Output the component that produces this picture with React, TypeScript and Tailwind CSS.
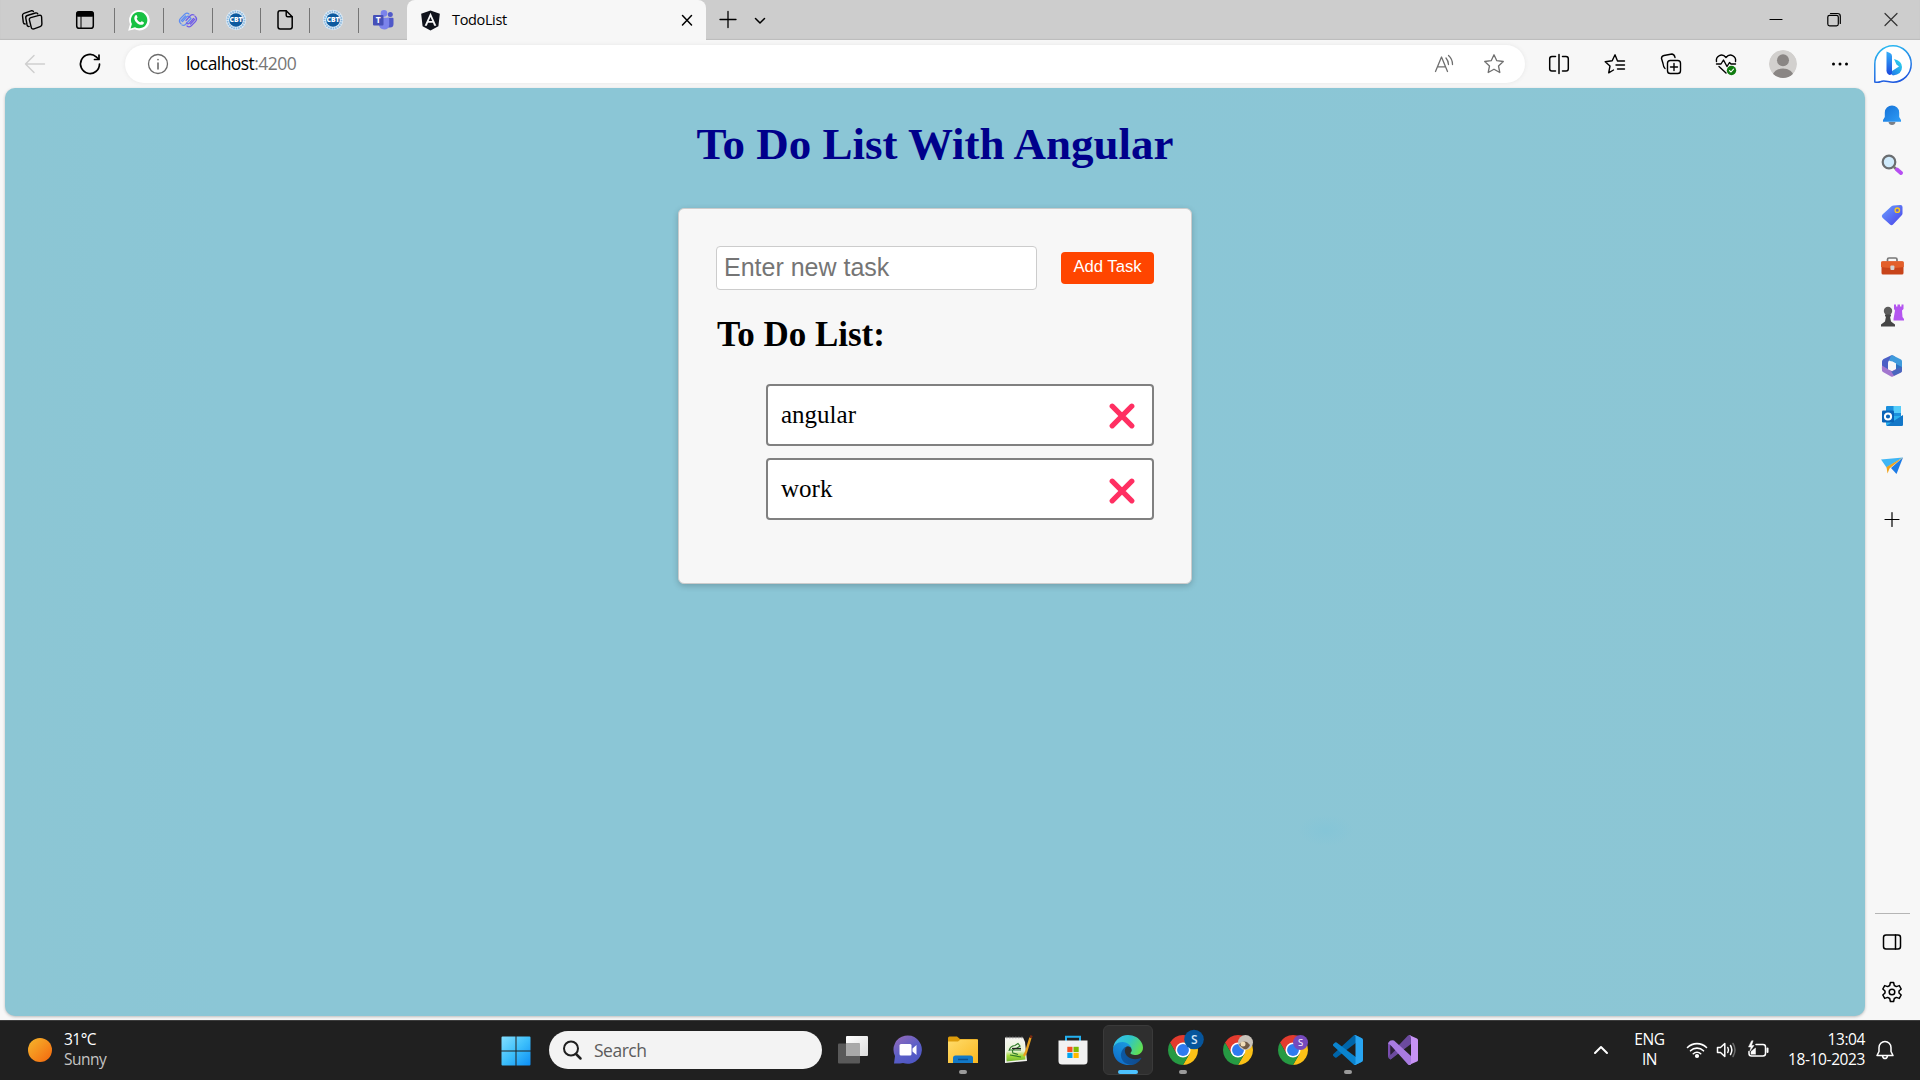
import type { ReactNode } from "react";
import { FaAngular } from "react-icons/fa";

const UI = "font-['Open_Sans','Noto_Sans',sans-serif]";

type LineProps = { size?: number; sw?: number; className?: string; children: ReactNode };

/** Line icon on a square canvas centred on 0,0; one unit is one pixel. */
function Line({ size = 24, sw = 1.4, className = "", children }: LineProps) {
  return (
    <svg
      width={size}
      height={size}
      viewBox={`${-size / 2} ${-size / 2} ${size} ${size}`}
      fill="none"
      stroke="currentColor"
      strokeWidth={sw}
      strokeLinecap="round"
      strokeLinejoin="round"
      className={`shrink-0 ${className}`}
    >
      {children}
    </svg>
  );
}

function Cell({ className, children }: { className: string; children?: ReactNode }) {
  return <div className={`flex shrink-0 items-center justify-center ${className}`}>{children}</div>;
}

const STAR = "M0-9.2 2.8-3.3 9.3-2.5 4.5 2 5.8 8.5 0 5.2-5.8 8.5-4.5 2-9.3-2.5-2.8-3.3Z";

/* ---------- Tab strip ---------- */

function WorkspacesIcon() {
  return (
    <Line size={26} sw={1.4}>
      <path d="M-1.2-2.4 7-4.6q2.2-.6 2.6 1.4L9.9 4q.1 2-1.8 2.6L2 8.9Q-.4 9.5-.8 7.2L-2.6 0q-.4-1.9 1.4-2.4Z" />
      <path d="M-2.8 6.4Q-4.5 6.8-4.9 5L-6.2-1.900q-.4-2 1.500-2.600L3.400-7q1.600-.4 2.400.9" />
      <path d="M-6.800 4Q-8.400 4-8.700 2.400L-9.500-4.300q-.2-1.800 1.400-2.400L-.9-9.200q1.500-.4 2.300.6" />
    </Line>
  );
}

function TabActionsIcon() {
  return (
    <Line size={24} sw={1.5}>
      <rect x="-8.3" y="-8.3" width="16.6" height="16.6" rx="2.6" />
      <path d="M-8-5.8v-.6Q-8-8-6-8H6q2 0 2 1.6v1.6q0 .8-1 .8H-7q-1 0-1-.8Z" fill="currentColor" />
      <path d="M-4-4V8" strokeWidth="1" />
    </Line>
  );
}

function WhatsAppIcon() {
  return (
    <svg width="22" height="22" viewBox="-11 -11 22 22">
      <path d="M-10 10-8.4 4.2A9.7 9.7 0 1 1-4.4 8.6Z" fill="#fff" stroke="#fff" strokeWidth="1.2" />
      <path d="M-8.4 8.4-7.1 4A8.2 8.2 0 1 1-4 7.2Z" fill="#18c143" />
      <path d="M-3.6-4.6c.5-.5 1.2-.4 1.4.1l.7 1.7c.1.5-.9 1-.7 1.5C-1.4.4-.2 1.6 1.2 2.2c.5.2 1.1-1.1 1.6-.9l1.9.9c.6.4-.1 2-.8 2.3C1.7 5.5-.9 4.2-2.6 2.5-4.4.7-5.7-2.6-3.6-4.6Z" fill="#fff" />
    </svg>
  );
}

function SwirlIcon() {
  return (
    <svg width="22" height="22" viewBox="-11 -11 22 22" fill="none" strokeWidth="1.2" strokeLinecap="round">
      <g stroke="#5d8df5">
        <path d="M-7 3.800Q-10 1-7.500-1.500L-3-6Q-1-7.800 1-6" />
        <path d="M-5.500 1.500-1.500-3Q0-4.500 1.500-3L3 -1.500" />
        <path d="M-6 5Q-4 6-2.500 4.500L2.500-1" />
        <path d="M-7 1-2.500-4" />
      </g>
      <g stroke="#6f5be8">
        <path d="M7-3.800Q10-1 7.500 1.500L3 6Q1 7.800-1 6" />
        <path d="M5.500-1.500 1.500 3Q0 4.500-1.500 3" />
        <path d="M6-5Q4-6 2.500-4.500L-2 .5" />
        <path d="M7-1 2.500 4" />
      </g>
    </svg>
  );
}

function BadgeIcon() {
  return (
    <svg width="22" height="22" viewBox="-11 -11 22 22" className="-translate-x-px">
      <circle r="10.2" fill="#dcebf7" />
      <circle r="8.500" fill="none" stroke="#8db8dc" strokeWidth="1.800" strokeDasharray="1.500 .9" />
      <circle r="6.800" fill="#0d5a9f" />
      <text y="2.300" textAnchor="middle" fontSize="6.500" fontWeight="800" fill="#fff" textLength="13" lengthAdjust="spacingAndGlyphs" fontFamily="Open Sans, sans-serif">CBT</text>
    </svg>
  );
}

function FileIcon() {
  return (
    <Line size={24} sw={1.5}>
      <path d="M-5-9.300H1.200L7.200-3.300V6.800q0 2.200-2.200 2.200H-4.800Q-7 9-7 6.800V-7.100q0-2.200 2-2.200Z" />
      <path d="M1.200-9V-4.800q0 1.500 1.500 1.500H7" />
    </Line>
  );
}

function TeamsIcon() {
  return (
    <svg width="24" height="22" viewBox="-12 -11 24 22">
      <circle cx="7.300" cy="-5.500" r="2.500" fill="#5059c9" />
      <path d="M4.500-2.200H9.700Q10.500-2.200 10.500-1.200V4Q10.500 7.600 7 7.600H4.500Z" fill="#5059c9" />
      <circle cx="1" cy="-6.600" r="3.300" fill="#7b83eb" />
      <path d="M-4-2.200H5.200Q6.200-2.200 6.200-1V4.500Q6 9.500 1.200 9.500-4 9.300-4.200 4Z" fill="#7b83eb" />
      <rect x="-10" y="-5" width="10.500" height="10.500" rx="1" fill="#4650b8" />
      <text x="-4.700" y="3.300" textAnchor="middle" fontSize="8.500" fontWeight="700" fill="#fff" fontFamily="Open Sans, sans-serif">T</text>
    </svg>
  );
}

const PINNED: { icon: ReactNode; width: string }[] = [
  { icon: <WhatsAppIcon />, width: "w-[48px]" },
  { icon: <SwirlIcon />, width: "w-[48px]" },
  { icon: <BadgeIcon />, width: "w-[47px]" },
  { icon: <FileIcon />, width: "w-[48px]" },
  { icon: <BadgeIcon />, width: "w-[48px]" },
  { icon: <TeamsIcon />, width: "w-[48px]" },
];

function TabStrip() {
  return (
    <div className="flex h-10 shrink-0 items-center bg-[#cdcdcd] text-black shadow-[inset_0_-1px_1px_#bcbcbc]">
      <Cell className="w-16"><WorkspacesIcon /></Cell>
      <Cell className="mr-2 w-[42px]"><TabActionsIcon /></Cell>
      {PINNED.map((p, i) => (
        <div key={i} className="flex items-center">
          <div className="h-[25px] w-px bg-[#757575]" />
          <Cell className={`h-10 ${p.width}`}>{p.icon}</Cell>
        </div>
      ))}
      <div className="flex h-10 w-[299px] shrink-0 items-center rounded-t-lg bg-[#f7f7f7] pl-[12px] pr-[9px]">
        <FaAngular size={23} className="text-[#10131c]" />
        <span className={`${UI} ml-[10px] flex-1 text-[14.5px] leading-5 tracking-[-0.35px]`}>TodoList</span>
        <Line size={20} sw={1.5}><path d="M-4.500-4.500 4.500 5M4.500-4.500-4.500 5" /></Line>
      </div>
      <Cell className="w-[44px]"><Line sw={1.3} size={22}><path d="M-8-.5H8M0-8.500V7.500" /></Line></Cell>
      <Cell className="w-5"><Line size={16} sw={1.5}><path d="M-4.500-1.500 0 3 4.500-1.500" /></Line></Cell>
      <div className="flex-1" />
      <Cell className="w-[58px]"><Line size={18} sw={1.2}><path d="M-6-.5H6" /></Line></Cell>
      <Cell className="w-[57px]">
        <Line size={18} sw={1.2}>
          <rect x="-6.200" y="-4.700" width="10.500" height="10.500" rx="1.800" />
          <path d="M-3.500-6.500H3.500Q6.300-6.500 6.300-3.700V3.500" />
        </Line>
      </Cell>
      <Cell className="w-[58px]"><Line size={18} sw={1.2} className="text-[#333]"><path d="M-6-6.500 6 5.500M6-6.500-6 5.500" /></Line></Cell>
    </div>
  );
}

/* ---------- Address bar ---------- */

function BingIcon() {
  return (
    <svg width="42" height="42" viewBox="-21 -21 42 42">
      <defs>
        <linearGradient id="bingRing" x1="0" y1="0" x2="0.3" y2="1">
          <stop offset="0" stopColor="#2cc3f2" /><stop offset="1" stopColor="#1f5be0" />
        </linearGradient>
        <linearGradient id="bingStem" x1="0" y1="0" x2="0" y2="1">
          <stop offset="0" stopColor="#35b0fa" /><stop offset="1" stopColor="#1b48dd" />
        </linearGradient>
        <linearGradient id="bingBowl" x1="0" y1="1" x2="1" y2="0">
          <stop offset="0" stopColor="#1d62e8" /><stop offset="1" stopColor="#2fe0ee" />
        </linearGradient>
      </defs>
      <path d="M-18.200 18V0A18.200 18.200 0 1 1 0 18.200C-5 18-9 16-12 17.500Q-15 18.800-18.200 18Z" fill="#fff" stroke="url(#bingRing)" strokeWidth="1.500" />
      <path d="M-6.500 6.500 0 11.500Q9 10.500 9 3 9-3 1-5L3.500.5 6 2.500-1 7Z" fill="url(#bingBowl)" />
      <path d="M-6.500-12.500-3-11Q-1-10-1-8V8Q-1 11-3.500 11-6.500 9.500-6.500 6.500Z" fill="url(#bingStem)" />
    </svg>
  );
}

function Toolbar() {
  return (
    <div className="flex h-12 shrink-0 items-center bg-[#f7f7f7] pb-px text-black">
      <Cell className="w-[70px]"><Line sw={1.4} className="text-[#cfcfcf]"><path d="M9.500 0H-9.500M-1-8.500-9.500 0-1 8.500" /></Line></Cell>
      <Cell className="w-[40px]">
        <Line sw={1.7}>
          <path d="M9.500 0A9.500 9.500 0 1 1 6.200-7.200L8.500-5" />
          <path d="M9-9V-4.500H4.500" />
        </Line>
      </Cell>
      <div className="ml-[15px] flex h-[38px] w-[1400px] items-center rounded-full bg-white pl-[21px] shadow-[0_0_4px_#e6e6e6]">
        <Line className="text-[#6b6b6b]" sw={1.3}>
          <circle r="9.500" />
          <path d="M0-1V5M0-4.500V-4.300" strokeWidth="1.600" />
        </Line>
        <div className={`${UI} ml-[16px] flex-1 pb-px text-[17.5px] leading-6 tracking-[-0.56px]`}>
          localhost<span className="text-[#767676]">:4200</span>
        </div>
        <Cell className="w-[50px]">
          <Line className="text-[#6f6f6f]" sw={1.3}>
            <path d="M-8.500 7.500-2.500-7 3.500 7.500M-6.500 2.800H1.500M2-6Q4.500-3 4.500.5M4.500-8.500Q8.500-5 8.500.5" />
          </Line>
        </Cell>
        <Cell className="mr-[6px] w-[50px]"><Line className="text-[#6f6f6f]" sw={1.3}><path d={STAR} /></Line></Cell>
      </div>
      <Cell className="ml-[6px] w-[56px]">
        <Line sw={1.5}>
          <path d="M-3.500-7.500H-7q-2.300 0-2.300 2.300V4.700Q-9.300 7-7 7h3.500M3.500-7.500H7q2.300 0 2.300 2.300V4.700Q9.300 7 7 7H3.500M0-9.500V9.500" />
        </Line>
      </Cell>
      <Cell className="w-[56px]">
        <Line sw={1.4}>
          <path d="M2.500-3 0-9.200-2.800-3.200-9.800-2.300-5 2-6.300 8.800-1.500 6M2.500-3H9.500M1 1H9.500M2.500 5H9.500" />
        </Line>
      </Cell>
      <Cell className="w-[55px]">
        <Line sw={1.4}>
          <rect x="-3.500" y="-3.500" width="13" height="13" rx="2.800" />
          <path d="M3-.5V6.500M-.5 3H6.500M-6 4.500Q-7.500 3.500-8-.5L-9.500-5.500Q-9.500-8-7-8.500L1-10Q3.500-9.500 4-6.500" />
        </Line>
      </Cell>
      <Cell className="w-[55px]">
        <Line sw={1.4}>
          <path d="M-9.500-2.500C-10.500-8-4-11.500 0-6.500 4-11.500 10.500-8 9.500-2.500M-9.500 0H-5L-2.500-4 1 2.500 3.500-1.500 5 0H9.500M-7 2.500 0 9" />
          <circle cx="5.500" cy="6.500" r="4.700" fill="#107c10" stroke="none" />
          <path d="M3.500 6.700 5 8 7.500 5.200" stroke="#fff" strokeWidth="1.100" />
        </Line>
      </Cell>
      <Cell className="w-[59px]">
        <svg width="28" height="28" viewBox="-14 -14 28 28">
          <clipPath id="avatarClip"><circle r="14" /></clipPath>
          <g clipPath="url(#avatarClip)">
            <circle r="14" fill="#d2d0ce" />
            <circle cy="-3.800" r="6" fill="#8a8684" />
            <ellipse cy="12" rx="10.500" ry="7.500" fill="#8a8684" />
          </g>
        </svg>
      </Cell>
      <Cell className="w-[56px]">
        <Line><g fill="currentColor" stroke="none"><circle cx="-6.500" r="1.500" /><circle r="1.500" /><circle cx="6.500" r="1.500" /></g></Line>
      </Cell>
      <Cell className="w-[50px] pt-px"><BingIcon /></Cell>
    </div>
  );
}

/* ---------- To-do page ---------- */

function Task({ label, markOffset }: { label: string; markOffset: string }) {
  return (
    <li className="flex h-[62px] items-center justify-between rounded-[4px] border-2 border-[#808080] bg-white pl-[13px] pr-[17px]">
      <span className="pb-px text-[25px] leading-7">{label}</span>
      <svg width="26" height="26" viewBox="-13 -13 26 26" className={markOffset}>
        <path d="M-9.800-9.800 9.800 9.800M9.800-9.800-9.800 9.800" stroke="#ff2f62" strokeWidth="5.200" strokeLinecap="round" />
      </svg>
    </li>
  );
}

function TodoPage() {
  return (
    <main className="ml-[5px] flex h-[928px] w-[1860px] shrink-0 flex-col items-center rounded-[10px] bg-[#8bc6d6] bg-[radial-gradient(ellipse_at_71%_80%,#85c5d7_0,#8bc6d600_1.5%),linear-gradient(90deg,#8cc6d4,#8bc6d6_12%,#8bc6d6_60%,#8cc6d4)] font-['Liberation_Serif',serif] shadow-[0_1px_3px_#bbb]">
      <h1 className="mt-[28px] text-[45px] font-bold leading-[56px] text-[#00008b]">To Do List With Angular</h1>
      <section className="mt-[36px] flex h-[376px] w-[514px] flex-col rounded-[6px] border border-[#ccc] bg-[#f7f7f7] px-[37px] pt-[37px] text-black shadow-[0_2px_6px_#00000033]">
        <div className="flex items-center justify-between">
          <input
            className="h-[44px] w-[321px] rounded-[4px] border border-[#ccc] bg-white px-[7px] pb-[2px] font-['Liberation_Sans',sans-serif] text-[25px] placeholder:text-[#757575]"
            placeholder="Enter new task"
          />
          <button className="h-[32px] w-[93px] rounded-[4px] bg-[#ff4500] pb-[2px] font-['Liberation_Sans',sans-serif] text-[16.67px] leading-5 text-white">
            Add Task
          </button>
        </div>
        <h2 className="mt-[23px] pl-px text-[35px] font-bold leading-[44px]">To Do List:</h2>
        <ul className="ml-[50px] mt-[27px] flex flex-col gap-3">
          <Task label="angular" markOffset="mt-[2px]" />
          <Task label="work" markOffset="mt-[4px]" />
        </ul>
      </section>
    </main>
  );
}

/* ---------- Edge sidebar ---------- */

function BellApp() {
  return (
    <svg width="24" height="24" viewBox="-12 -12 24 24">
      <defs><linearGradient id="sbBell" x1="0" y1="0" x2="1" y2="1"><stop offset="0" stopColor="#1570d6" /><stop offset="1" stopColor="#2f9df7" /></linearGradient></defs>
      <path d="M-3.500 7H3.500Q3 10 0 10T-3.500 7Z" fill="#7b7f86" />
      <path d="M-9 6.800V5L-7.200 2V-2.500A7.200 7 0 0 1 7.200-2.500V2L9 5V6.800Z" fill="url(#sbBell)" />
    </svg>
  );
}
function SearchApp() {
  return (
    <svg width="24" height="24" viewBox="-12 -12 24 24">
      <path d="M2 2 5 5" stroke="#777" strokeWidth="2.500" />
      <path d="M5 4.500 9 8" stroke="#b64ef2" strokeWidth="4" strokeLinecap="round" />
      <circle cx="-3" cy="-3" r="6.300" fill="#cfeafb" stroke="#6a6d70" strokeWidth="2.200" />
    </svg>
  );
}
function TagApp() {
  return (
    <svg width="24" height="24" viewBox="-12 -12 24 24">
      <defs><linearGradient id="sbTag" x1="0" y1="0" x2="1" y2="1"><stop offset="0" stopColor="#6aa2ff" /><stop offset="1" stopColor="#4a3fe8" /></linearGradient></defs>
      <path d="M1.500-9.500 8.500-10Q10.500-10 10.500-8V-1.500Q10.500-.5 9.500.5L1 9.500Q-.5 10.800-2 9.500L-9.500 2.800Q-11 1-9.500-.5L-.5-8.700Q.5-9.500 1.500-9.500Z" fill="url(#sbTag)" />
      <circle cx="5.300" cy="-4.800" r="2.200" fill="#6c67d0" stroke="#f8c81e" strokeWidth="1.400" />
    </svg>
  );
}
function ToolboxApp() {
  return (
    <svg width="24" height="24" viewBox="-12 -12 24 24">
      <path d="M-4.500-4.500V-6.500Q-4.500-8-3-8H3.500Q5-8 5-6.500V-4.500" fill="none" stroke="#777" strokeWidth="1.700" />
      <rect x="-10.500" y="-4.500" width="22" height="13" rx="1.500" fill="#c8441a" />
      <path d="M-11-3.500Q-11-4.800-9.700-4.800H10.500Q11.800-4.800 11.800-3.500V1Q0 3-11 1Z" fill="#e35f2a" />
      <rect x="-1.600" y="-.5" width="4" height="4.500" rx="1" fill="#d4d4d4" />
    </svg>
  );
}
function GamesApp() {
  return (
    <svg width="24" height="24" viewBox="-12 -12 24 24">
      <path d="M2-11.500H4V-9.500H5.500V-11.500H8V-9.500H9.500V-11.500H11.500V-7L10-5.500 10.500 1 12 3V4.500H1.500V3L3-5.500 2-7Z" fill="#b455f0" />
      <circle cx="-4" cy="-5" r="4.200" fill="#5c5c5c" />
      <path d="M-7-1.500H-1V.5H-2L-1 5.500 3 8.500V10.500H-11V8.500L-7 5.500-6 .5H-7Z" fill="#454545" />
    </svg>
  );
}
function M365App() {
  return (
    <svg width="24" height="24" viewBox="-12 -12 24 24">
      <path d="M-10-4.500Q-10-6-8.500-7L-1-10.500Q0-11 1-10.500L3-9.500-3-5.500Q-4-4.500-4-3V3L-9 5.500Q-10 5-10-1Z" fill="#4b5fc6" />
      <path d="M-1-10.500Q0-11 1-10.500L9-6.500Q10-6 10-4.500V5Q8 7 4 4V-2Q4-3-3-5.500Z" fill="#3f9bdc" />
      <path d="M10 1V4.500Q10 6 9 6.500L1 10.500Q0 11-1 10.500L-9 6Q-10.500 5-10-.5L-3.500 3.500 0 5 4 3Z" fill="#a276ce" />
      <path d="M4-2V3.500L0 5.500-1 5 2 9.800 9 6.500Q10 6 10 4V1Z" fill="#2b62b8" opacity=".75" />
      <path d="M0-4.800 4-2.500V2.500L0 4.800-4 2.500V-2.500Z" fill="#f7f7f7" />
    </svg>
  );
}
function OutlookApp() {
  return (
    <svg width="24" height="24" viewBox="-12 -12 24 24">
      <rect x="-6" y="-10" width="15" height="14" rx="1" fill="#1a8fdd" />
      <rect x="1.500" y="-10" width="7.500" height="7" fill="#55cdfa" />
      <path d="M-6 0 11 0V8.500Q11 10-1 10-6 10-6 8.500Z" fill="#2bb1ee" />
      <path d="M-6 10 11-1V9Q11 10 9.500 10Z" fill="#1377c8" />
      <rect x="-10" y="-5.500" width="12" height="12" rx="1.200" fill="#0a64b8" />
      <circle cx="-4" cy=".5" r="3.100" fill="none" stroke="#fff" strokeWidth="2" />
    </svg>
  );
}
function DropApp() {
  return (
    <svg width="24" height="24" viewBox="-12 -12 24 24">
      <path d="M-11-6.500 11-8.500-5.500 1.500Z" fill="#3fb6f5" />
      <path d="M-5.500 1 11-8.500-2.500 2.500-4.500 7.500Z" fill="#f0a31c" />
      <path d="M-1 2 11-8.500 4.500 8Z" fill="#1d7be6" />
    </svg>
  );
}

const SIDE_APPS: { icon: ReactNode; height: string }[] = [
  { icon: <BellApp />, height: "h-[50px]" },
  { icon: <SearchApp />, height: "h-[50px]" },
  { icon: <TagApp />, height: "h-[50px]" },
  { icon: <ToolboxApp />, height: "h-[51px]" },
  { icon: <GamesApp />, height: "h-[50px]" },
  { icon: <M365App />, height: "h-[50px]" },
  { icon: <OutlookApp />, height: "h-[50px]" },
  { icon: <DropApp />, height: "h-[50px]" },
];

const GEAR =
  "M-1.600-9.500H1.600L2.300-6.500 4.300-5.400 7.300-6.400 9.200-3 7-1V1L9.200 3 7.300 6.400 4.300 5.400 2.300 6.500 1.600 9.500H-1.600L-2.300 6.500-4.300 5.400-7.300 6.400-9.200 3-7 1V-1L-9.200-3-7.300-6.400-4.300-5.400-2.300-6.500Z";

function Sidebar() {
  return (
    <aside className="flex w-[54px] shrink-0 flex-col items-center pt-[2px] text-black">
      {SIDE_APPS.map((a, i) => (
        <Cell key={i} className={`w-full ${a.height}`}>{a.icon}</Cell>
      ))}
      <Cell className="mt-[3px] h-[50px]"><Line sw={1.2}><path d="M-7 .5H7M0-6.500V7.500" /></Line></Cell>
      <div className="flex-1" />
      <div className="h-px w-[35px] bg-[#b5b5b5]" />
      <Cell className="mt-[3px] h-[50px]">
        <Line sw={1.5}><rect x="-8.500" y="-7" width="17" height="14" rx="2.500" /><path d="M3.500-7V7" /></Line>
      </Cell>
      <Cell className="mb-[3px] h-[50px]">
        <Line sw={1.5}><path d={GEAR} /><circle r="2.800" /></Line>
      </Cell>
    </aside>
  );
}

/* ---------- Taskbar ---------- */

function Chrome({ children }: { children?: ReactNode }) {
  return (
    <svg width="42" height="42" viewBox="-21 -21 42 42">
      <g transform="translate(-15 -15) scale(.625)">
        <path d="M24 24 13.600 30 3.220 12A24 24 0 0 1 44.780 12H24Z" fill="#e33b2e" />
        <path d="M44.780 12A24 24 0 0 1 24 48L34.390 30 24 12Z" fill="#fbc116" />
        <path d="M3.220 12A24 24 0 0 0 24 48L34.390 30 24 24 13.600 30Z" fill="#269a43" />
        <circle cx="24" cy="24" r="12" fill="#fff" />
        <circle cx="24" cy="24" r="9.500" fill="#2f7bf0" />
      </g>
      {children}
    </svg>
  );
}

function EdgeIcon() {
  return (
    <svg width="30" height="30" viewBox="0 0 256 256">
      <defs>
        <linearGradient id="edA" x1="0" x2="1"><stop offset="0" stopColor="#0c59a4" /><stop offset="1" stopColor="#114a8b" /></linearGradient>
        <linearGradient id="edB" x1=".8" y1="0" x2=".3" y2="1"><stop offset="0" stopColor="#1b9de2" /><stop offset="1" stopColor="#0f6cc8" /></linearGradient>
        <linearGradient id="edC" x1="0" y1=".2" x2="1" y2=".6"><stop offset="0" stopColor="#35c1f1" /><stop offset=".5" stopColor="#2fc5c8" /><stop offset="1" stopColor="#62e04e" /></linearGradient>
      </defs>
      <path fill="url(#edA)" d="M235.700 195.500a93.700 93.700 0 0 1-10.600 4.700 101.900 101.900 0 0 1-35.900 6.400c-47.300 0-88.500-32.500-88.500-74.300a31.500 31.500 0 0 1 16.400-27.300c-42.800 1.800-53.800 46.400-53.800 72.500 0 74 68.100 81.400 82.800 81.400 7.900 0 19.800-2.300 27-4.600l1.300-.4a128.300 128.300 0 0 0 66.600-52.800 4 4 0 0 0-5.300-5.600z" />
      <path fill="url(#edB)" d="M105.700 241.400a79.200 79.200 0 0 1-22.700-21.300 80.700 80.700 0 0 1 29.500-120c3.200-1.500 8.500-4.100 15.600-4a32.400 32.400 0 0 1 25.700 13 31.900 31.900 0 0 1 6.300 18.700c0-.2 24.500-79.600-80-79.600-43.900 0-80 41.700-80 78.200a130.200 130.200 0 0 0 12.100 56 128 128 0 0 0 156.400 67.100 75.500 75.500 0 0 1-62.800-8z" />
      <path fill="url(#edC)" d="M152.300 148.900c-.9 1-3.400 2.500-3.400 5.600 0 2.600 1.700 5.200 4.800 7.300 14.300 10 41.400 8.600 41.500 8.600a59.600 59.600 0 0 0 30.300-8.300 61.400 61.400 0 0 0 30.400-52.900c.3-22.400-8-37.300-11.300-43.900C223.500 23.900 177.700 0 128 0A128 128 0 0 0 0 126.200c.5-36.500 36.800-66 80-66 3.500 0 23.500.3 42 10.100a72.600 72.600 0 0 1 30.900 29.300c6.100 10.600 7.200 24.100 7.200 29.500s-2.700 13.300-7.800 19.900z" />
    </svg>
  );
}

function VSCodeIcon() {
  return (
    <svg width="30" height="30" viewBox="0 0 100 100">
      <path fill="#0065a9" d="M96.460 10.800 75.860.88a6.230 6.230 0 0 0-7.100 1.200L1.300 63.580a4.170 4.170 0 0 0 0 6.160l5.510 5a4.170 4.170 0 0 0 5.320.24L93.370 13.360A4.130 4.130 0 0 1 100 16.660v-.24a6.250 6.250 0 0 0-3.540-5.620z" />
      <path fill="#0a84cf" d="M96.460 89.200 75.860 99.120a6.230 6.230 0 0 1-7.100-1.200L1.300 36.420a4.170 4.170 0 0 1 0-6.160l5.510-5a4.170 4.170 0 0 1 5.320-.24L93.370 86.640a4.130 4.130 0 0 0 6.630-3.300v.24a6.250 6.250 0 0 1-3.540 5.620z" />
      <path fill="#28a5f2" d="M75.860 99.130a6.230 6.230 0 0 1-7.110-1.210 3.670 3.670 0 0 0 6.270-2.590V4.670a3.670 3.670 0 0 0-6.270-2.590A6.230 6.230 0 0 1 75.860.87l20.600 9.900A6.250 6.250 0 0 1 100 16.400v67.200a6.250 6.250 0 0 1-3.540 5.630z" />
    </svg>
  );
}

function VSIcon() {
  return (
    <svg width="30" height="30" viewBox="-15 -15 30 30">
      <path d="M-15-6.500-12.500-9.500-4-2.500-4 2.500-12.500 9.500-15 6.500Z" fill="#7a4db0" />
      <path d="M-12.500-5-7.500 0-12.500 5Z" fill="#2c2038" />
      <path d="M-12.500 9.500Q-15 8.500-15 6.500L5-14.500Q6.500-15.500 8-14.500L8-6Z" fill="#6b4a9e" />
      <path d="M-12.500-5-7.500 0-12.500 5Z" fill="#2c2038" />
      <path d="M-15-6.500Q-14-9.500-10.500-9.800L-9-9.500 8 6V14.500Q6 15.500 5 14.500L-12.500-5Z" fill="#a87be0" />
      <path d="M6-15 14-11.500Q15-11 15-10V10Q15 11 14 11.500L6 15Q8 14 8 12V-12Q8-14 6-15Z" fill="#c792f5" />
    </svg>
  );
}

function StartIcon() {
  return (
    <svg width="30" height="30" viewBox="-15 -15 30 30">
      <defs><linearGradient id="winG" x1="-15" y1="-15" x2="15" y2="15" gradientUnits="userSpaceOnUse"><stop offset="0" stopColor="#86e0ff" /><stop offset=".5" stopColor="#3dbffb" /><stop offset="1" stopColor="#0a8cf5" /></linearGradient></defs>
      <path d="M-13.500-14.500H-.5V-.5H-14.500V-13.500Q-14.500-14.500-13.500-14.500ZM.5-14.500H13.500Q14.500-14.500 14.500-13.500V-.5H.5ZM-14.500.5H-.5V14.500H-13.500Q-14.500 14.500-14.500 13.500ZM.5.5H14.500V13.500Q14.500 14.500 13.500 14.500H.5Z" fill="url(#winG)" />
    </svg>
  );
}

function TaskViewIcon() {
  return (
    <svg width="30" height="30" viewBox="-15 -15 30 30">
      <defs><linearGradient id="tvG" x1="0" y1="0" x2="1" y2="1"><stop offset="0" stopColor="#fff" /><stop offset="1" stopColor="#dcdcdc" /></linearGradient></defs>
      <rect x="-7" y="-14" width="22" height="20" rx="1" fill="url(#tvG)" />
      <rect x="-15" y="-6.500" width="22" height="20" rx="1" fill="#595959" />
      <rect x="-7" y="-6.500" width="14" height="12.500" fill="#a9a9a9" />
    </svg>
  );
}

function ChatIcon() {
  return (
    <svg width="30" height="30" viewBox="-15 -15 30 30">
      <defs><linearGradient id="chatG" x1="0" y1="0" x2=".6" y2="1"><stop offset="0" stopColor="#9a6bb8" /><stop offset=".6" stopColor="#5b5fc7" /><stop offset="1" stopColor="#4f57c4" /></linearGradient></defs>
      <path d="M-14 13.500-13 6A14.200 14.200 0 1 1-5 13Q-9 13.800-14 13.500Z" fill="url(#chatG)" />
      <rect x="-8.500" y="-6" width="12" height="11.500" rx="1.500" fill="#fff" />
      <path d="M4.500-1.500 8.500-5V5L4.500 1.500Z" fill="#fff" />
    </svg>
  );
}

function ExplorerIcon() {
  return (
    <svg width="30" height="30" viewBox="-15 -15 30 30">
      <defs><linearGradient id="fxG" x1="0" y1="0" x2="1" y2="1"><stop offset="0" stopColor="#ffdc6b" /><stop offset="1" stopColor="#f9b720" /></linearGradient></defs>
      <path d="M-15-12Q-15-13.500-13.500-13.500H-6L-3-11H13.500Q15-11 15-9.500V0H-15Z" fill="#dd9c0b" />
      <path d="M-15-8.500H-5L-2.500-10.500H15V13H-15Z" fill="url(#fxG)" />
      <path d="M-10 13V8Q-10 5.500-7.500 5.500H7.500Q10 5.500 10 8V13Z" fill="#1279c8" />
      <path d="M-5 9.500H5" stroke="#0b4d8c" strokeWidth="1.500" />
    </svg>
  );
}

function NotepadPPIcon() {
  return (
    <svg width="30" height="30" viewBox="-15 -15 30 30">
      <defs><linearGradient id="nppG" x1="0" y1="0" x2="0" y2="1"><stop offset="0" stopColor="#f6f6f2" /><stop offset=".55" stopColor="#e8f3d4" /><stop offset=".75" stopColor="#a4dc3c" /><stop offset="1" stopColor="#6fb52c" /></linearGradient></defs>
      <path d="M-13-12.500H5L7-8 9 11-13 13Z" fill="#f4f4f0" />
      <path d="M-12-11.500H4L6-8 7.500 9.500-11.500 11.500Z" fill="url(#nppG)" />
      <path d="M-12-12.500H5" stroke="#8a8a8a" strokeWidth="1.500" strokeDasharray="1.500 1.500" />
      <path d="M-9 1Q-8-4-3-4.500L0-6.500 2-4-1-2Q-7-1-5 3L0 4.500M-8 5 3 7M-8 0 3 0" fill="none" stroke="#2f7a2a" strokeWidth="1.200" />
      <path d="M-6-1.500H3" stroke="#222" strokeWidth="1.300" />
      <path d="M12.500-12.500 8 2 6 6" stroke="#e6a01e" strokeWidth="2.400" fill="none" />
      <path d="M13.600-14.500 12.600-12" stroke="#7a2b12" strokeWidth="2.400" />
    </svg>
  );
}

function StoreIcon() {
  return (
    <svg width="30" height="30" viewBox="-15 -15 30 30">
      <path d="M-7-9V-13.200H7V-9" fill="none" stroke="#24b1f0" strokeWidth="2" />
      <path d="M-14.500-9.500H14.500V11Q14.500 14.500 11 14.500H-11Q-14.500 14.500-14.500 11Z" fill="#f1f1f1" />
      <rect x="-5.700" y="-3.200" width="5.200" height="5.200" fill="#f25022" />
      <rect x=".5" y="-3.200" width="5.200" height="5.200" fill="#7fba00" />
      <rect x="-5.700" y="2.800" width="5.200" height="5.200" fill="#00a4ef" />
      <rect x=".5" y="2.800" width="5.200" height="5.200" fill="#ffb900" />
    </svg>
  );
}

type AppProps = { children: ReactNode; dot?: boolean; active?: boolean };

function TaskApp({ children, dot, active }: AppProps) {
  return (
    <Cell className="w-[55px]">
      <div className={`relative flex h-[50px] w-[50px] items-center justify-center rounded-md ${active ? "border border-[#3a3a3a] bg-[#2f2f2f]" : ""}`}>
        {children}
        {dot && <span className="absolute bottom-px left-[21px] h-1 w-2 rounded-full bg-[#9a9a9a]" />}
        {active && <span className="absolute bottom-0 left-[14px] h-1 w-5 rounded-full bg-[#4cc2ff]" />}
      </div>
    </Cell>
  );
}

function Taskbar() {
  return (
    <footer className={`${UI} flex h-[60px] shrink-0 items-center border-t border-[#3c3c3c] bg-[#202020] pb-px text-[15.5px] leading-5 tracking-[-0.4px] text-white`}>
      <div className="flex w-[488px] items-center pl-7">
        <div className="h-6 w-6 rounded-full bg-linear-to-br from-[#f4b62c] to-[#f2640c]" />
        <div className="ml-3 pb-[3px] tracking-[-0.5px]">
          <div>31°C</div>
          <div className="text-[#c4c4c4]">Sunny</div>
        </div>
      </div>
      <Cell className="w-[55px] pt-px"><StartIcon /></Cell>
      <div className="ml-[6px] mr-[3px] flex h-[38px] w-[273px] shrink-0 items-center rounded-full bg-[#f3f3f3] pl-3">
        <Line size={22} sw={2} className="text-[#1f1f1f]"><circle cx="-1" cy="-1.500" r="7" /><path d="M4 4 8.500 8.500" strokeWidth="2.500" /></Line>
        <span className="ml-[11px] text-[17.5px] tracking-[-0.5px] text-[#5c5c5c]">Search</span>
      </div>
      <TaskApp><TaskViewIcon /></TaskApp>
      <TaskApp><ChatIcon /></TaskApp>
      <TaskApp dot><ExplorerIcon /></TaskApp>
      <TaskApp><NotepadPPIcon /></TaskApp>
      <TaskApp><StoreIcon /></TaskApp>
      <TaskApp active><EdgeIcon /></TaskApp>
      <TaskApp dot>
        <Chrome>
          <circle cx="11" cy="-10.500" r="9.800" fill="#06559c" />
          <text x="11" y="-6" textAnchor="middle" fontSize="12" fontWeight="600" fill="#cfe3f5">S</text>
        </Chrome>
      </TaskApp>
      <TaskApp>
        <Chrome>
          <circle cx="7.500" cy="-7.500" r="7.500" fill="#c9c3ba" />
          <path d="M1-5Q4-10 9-8L12-5Q10 0 6-1Z" fill="#6f5a45" />
          <circle cx="5" cy="-6" r="2.500" fill="#f0ddb8" />
        </Chrome>
      </TaskApp>
      <TaskApp>
        <Chrome>
          <circle cx="7.500" cy="-7.500" r="7.500" fill="#7649bd" />
          <text x="7.500" y="-4" textAnchor="middle" fontSize="9.500" fill="#fff">S</text>
        </Chrome>
      </TaskApp>
      <TaskApp dot><VSCodeIcon /></TaskApp>
      <TaskApp><VSIcon /></TaskApp>
      <div className="flex-1" />
      <Cell className="w-[40px]"><Line sw={2} size={18}><path d="M-6 3 0-3 6 3" /></Line></Cell>
      <div className="w-[57px] pb-[2px] text-center">
        <div>ENG</div>
        <div>IN</div>
      </div>
      <Cell className="ml-[4px] w-[30px]">
        <Line sw={1.6}>
          <path d="M-9.500-2.500A13.500 13.500 0 0 1 9.500-2.500M-6.500.8A9.200 9.200 0 0 1 6.500.8M-3.700 3.700A5.300 5.300 0 0 1 3.700 3.700" />
          <circle cy="6" r="1.300" fill="currentColor" />
        </Line>
      </Cell>
      <Cell className="w-[30px]">
        <Line sw={1.5}>
          <path d="M-9.500-2.500H-6.500L-2.200-6.500V6.500L-6.500 2.500H-9.500ZM.8-2.500Q2.200 0 .8 2.500M3.500-4.500Q6.200 0 3.500 4.500" />
          <path d="M6-6.500Q10 0 6 6.500" stroke="#6b6b6b" />
        </Line>
      </Cell>
      <Cell className="w-[31px]">
        <Line sw={1.5}>
          <path d="M-2-5.500H5Q7.500-5.500 7.500-3V3.500Q7.500 6 5 6H-6.500Q-9 6-9 3.500V1.500" />
          <path d="M9.500-1.500V2" strokeWidth="2" />
          <path d="M-6.500-9-9.500-3H-7L-8 1-4-4.500H-6.500L-5-9Z" fill="currentColor" strokeWidth=".5" />
          <path d="M-7 4V1.500L-2.500-2V4Z" fill="currentColor" strokeWidth=".5" />
        </Line>
      </Cell>
      <div className="w-[92px] pb-[3px] text-right">
        <div>13:04</div>
        <div className="whitespace-nowrap">18-10-2023</div>
      </div>
      <Cell className="mr-[15px] w-[40px]">
        <Line sw={1.5}>
          <path d="M-8 5.500-6 1.500V-2.500A6 6 0 0 1 6-2.500V1.500L8 5.500ZM-2.500 6Q-2 8.500 0 8.500T2.500 6" />
        </Line>
      </Cell>
    </footer>
  );
}

export default function App() {
  return (
    <div className="flex h-[1080px] w-[1920px] flex-col overflow-hidden bg-[#f7f7f7]">
      <TabStrip />
      <Toolbar />
      <div className="flex h-[932px] shrink-0">
        <TodoPage />
        <Sidebar />
      </div>
      <Taskbar />
    </div>
  );
}
